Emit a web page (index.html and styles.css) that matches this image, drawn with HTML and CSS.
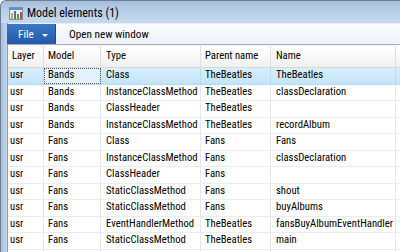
FILE: index.html
```html
<!DOCTYPE html>
<html>
<head>
<meta charset="utf-8">
<link rel="stylesheet" href="styles.css">
</head>
<body>
<div class="window">
  <div class="titlebar">
    <svg class="appicon" width="14" height="13" viewBox="0 0 14 13">
      <rect x="0.5" y="0.5" width="13" height="12" fill="#e8eef6" stroke="#7a8ba3"/>
      <rect x="1" y="1" width="12" height="2" fill="#5b8fd0"/>
      <rect x="2" y="6" width="2" height="6" fill="#e8a317"/>
      <rect x="5" y="4" width="2" height="8" fill="#3a78c8"/>
      <rect x="8" y="7" width="2" height="5" fill="#4aa03c"/>
      <rect x="11" y="5" width="2" height="7" fill="#d04a2a"/>
    </svg>
    <span class="title">Model elements (1)</span>
  </div>
  <div class="body">
    <div class="frame"></div>
    <div class="main">
      <div class="toolbar">
        <div class="filebtn">File <span class="caret"></span></div>
        <div class="tool">Open new window</div>
      </div>
      <div class="grid">
        <div class="row head">
          <div class="c c1">Layer</div><div class="c c2">Model</div><div class="c c3">Type</div><div class="c c4">Parent name</div><div class="c c5">Name</div><div class="c c6"></div>
        </div>
        <div class="row sel">
          <div class="c c1">usr</div><div class="c c2 focus">Bands</div><div class="c c3">Class</div><div class="c c4">TheBeatles</div><div class="c c5">TheBeatles</div><div class="c c6"></div>
        </div>
        <div class="row">
          <div class="c c1">usr</div><div class="c c2">Bands</div><div class="c c3">InstanceClassMethod</div><div class="c c4">TheBeatles</div><div class="c c5">classDeclaration</div><div class="c c6"></div>
        </div>
        <div class="row">
          <div class="c c1">usr</div><div class="c c2">Bands</div><div class="c c3">ClassHeader</div><div class="c c4">TheBeatles</div><div class="c c5"></div><div class="c c6"></div>
        </div>
        <div class="row">
          <div class="c c1">usr</div><div class="c c2">Bands</div><div class="c c3">InstanceClassMethod</div><div class="c c4">TheBeatles</div><div class="c c5">recordAlbum</div><div class="c c6"></div>
        </div>
        <div class="row">
          <div class="c c1">usr</div><div class="c c2">Fans</div><div class="c c3">Class</div><div class="c c4">Fans</div><div class="c c5">Fans</div><div class="c c6"></div>
        </div>
        <div class="row">
          <div class="c c1">usr</div><div class="c c2">Fans</div><div class="c c3">InstanceClassMethod</div><div class="c c4">Fans</div><div class="c c5">classDeclaration</div><div class="c c6"></div>
        </div>
        <div class="row">
          <div class="c c1">usr</div><div class="c c2">Fans</div><div class="c c3">ClassHeader</div><div class="c c4">Fans</div><div class="c c5"></div><div class="c c6"></div>
        </div>
        <div class="row">
          <div class="c c1">usr</div><div class="c c2">Fans</div><div class="c c3">StaticClassMethod</div><div class="c c4">Fans</div><div class="c c5">shout</div><div class="c c6"></div>
        </div>
        <div class="row">
          <div class="c c1">usr</div><div class="c c2">Fans</div><div class="c c3">StaticClassMethod</div><div class="c c4">Fans</div><div class="c c5">buyAlbums</div><div class="c c6"></div>
        </div>
        <div class="row">
          <div class="c c1">usr</div><div class="c c2">Fans</div><div class="c c3">EventHandlerMethod</div><div class="c c4">TheBeatles</div><div class="c c5">fansBuyAlbumEventHandler</div><div class="c c6"></div>
        </div>
        <div class="row">
          <div class="c c1">usr</div><div class="c c2">Fans</div><div class="c c3">StaticClassMethod</div><div class="c c4">TheBeatles</div><div class="c c5">main</div><div class="c c6"></div>
        </div>
        <div class="row">
          <div class="c c1"></div><div class="c c2"></div><div class="c c3"></div><div class="c c4"></div><div class="c c5"></div><div class="c c6"></div>
        </div>
      </div>
    </div>
  </div>
</div>
</body>
</html>
```
FILE: styles.css
```css
html, body {
  margin: 0;
  padding: 0;
  width: 400px;
  height: 252px;
  overflow: hidden;
  background: #fff;
}
.window {
  width: 400px;
  height: 252px;
  display: flex;
  flex-direction: column;
  font-family: "Roboto Condensed", "Noto Sans Display", "Noto Sans", sans-serif;
  font-stretch: condensed;
  font-size: 10.7px;
  color: #000;
  overflow: hidden;
}
.titlebar {
  height: 23px;
  flex: none;
  display: flex;
  align-items: center;
  gap: 4px;
  padding: 2px 0 0 8px;
  box-sizing: border-box;
  background: linear-gradient(#a3bddb, #b8cee7 40%, #c6d9ee);
  border-top: 1px solid #6f7f93;
  border-top-left-radius: 6px;
  border-left: 1px solid #6f7f93;
}
.appicon { flex: none; margin-top: 1px; }
.title {
  font-size: 12px;
  color: #000;
  line-height: 1;
}
.body {
  flex: 1;
  display: flex;
  min-height: 0;
}
.frame {
  width: 6px;
  flex: none;
  background: linear-gradient(90deg, #a9c1de, #c3d6ec);
  border-left: 1px solid #6f7f93;
  border-right: 1px solid #8f9fb3;
}
.main {
  flex: 1;
  display: flex;
  flex-direction: column;
  min-width: 0;
}
.toolbar {
  height: 20px;
  flex: none;
  display: flex;
  align-items: stretch;
  background: linear-gradient(#fbfcfe, #eef3f9);
  border-top: 1px solid #e6eef8;
  border-bottom: 1px solid #a7b1be;
  font-size: 11.2px;
}
.filebtn {
  width: 49px;
  margin-left: -1px;
  background: linear-gradient(#3a78c6, #2259a8);
  color: #fff;
  display: flex;
  align-items: center;
  padding-left: 11px;
  box-sizing: border-box;
  gap: 8px;
  border-right: 1px solid #1b4c8f;
}
.caret {
  width: 0;
  height: 0;
  border-left: 3px solid transparent;
  border-right: 3px solid transparent;
  border-top: 3px solid #fff;
  margin-top: 2px;
}
.tool {
  display: flex;
  align-items: center;
  padding-left: 13px;
  color: #000;
}
.grid {
  flex: 1;
  display: flex;
  flex-direction: column;
  border-top: 1px solid #f4f4f4;
}
.row {
  display: grid;
  grid-template-columns: 36px 57px 100px 70px 125px 1fr;
  height: 16.5px;
  flex: none;
  box-sizing: border-box;
  border-bottom: 1px solid #e9edf3;
}
.row.head {
  height: 22px;
  background: linear-gradient(#ffffff, #f7f7f7 60%, #efefef);
  border-bottom: 1px solid #d9d9d9;
}
.c {
  border-right: 1px solid #e3e8ef;
  padding-left: 4px;
  white-space: nowrap;
  overflow: hidden;
  display: flex;
  align-items: center;
  line-height: 1;
}
.c1 { padding-left: 2px; }
.c3, .c5 { padding-left: 5px; }
.head .c { border-right-color: #dedede; }
.head .c1 { padding-left: 4px; }
.c6 { border-right: none; }
.row.sel {
  background: linear-gradient(#d9effc, #c2e4f8);
  border-bottom-color: #b5d9f2;
}
.sel .c { border-right-color: #b9dcf3; }
.c.focus {
  outline: 1px dotted #555;
  outline-offset: -1px;
  background: #e2f2fc;
}
```
